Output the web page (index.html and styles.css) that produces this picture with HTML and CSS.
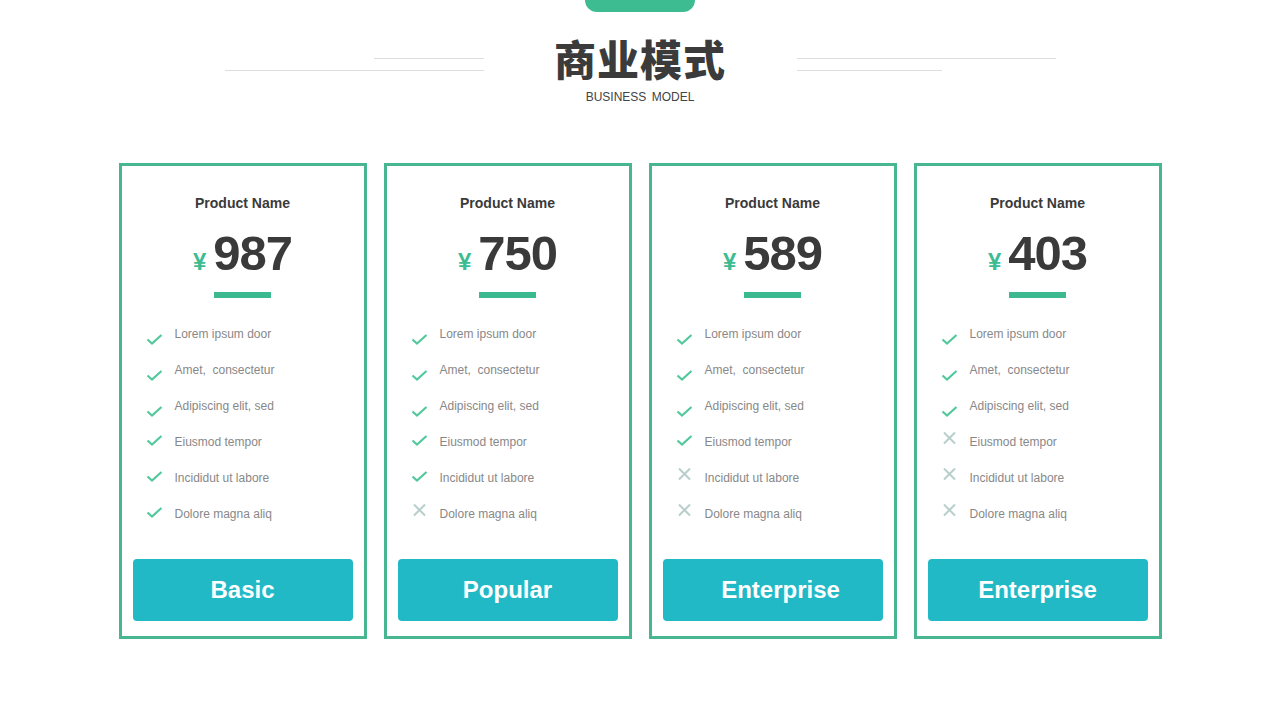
FILE: index.html
```html
<!DOCTYPE html>
<html>
<head>
  <title>商业模式</title>
  <link rel="stylesheet" href="styles.css">
</head>
<body>
  <div class="tab"></div>

  <div class="heading">
    <div class="rules rules-left">
      <span class="rule short"></span>
      <span class="rule"></span>
    </div>
    <div class="title">
      <h1>商业模式</h1>
      <p>BUSINESS MODEL</p>
    </div>
    <div class="rules rules-right">
      <span class="rule"></span>
      <span class="rule mid"></span>
    </div>
  </div>

  <div class="plans">
    <div class="plan">
      <h2>Product Name</h2>
      <div class="price"><span class="yen">¥</span>987</div>
      <div class="bar"></div>
      <ul class="features">
        <li class="yes">Lorem ipsum door</li>
        <li class="yes">Amet,&nbsp; consectetur</li>
        <li class="yes">Adipiscing elit, sed</li>
        <li class="yes">Eiusmod tempor</li>
        <li class="yes">Incididut ut labore</li>
        <li class="yes">Dolore magna aliq</li>
      </ul>
      <button>Basic</button>
    </div>

    <div class="plan">
      <h2>Product Name</h2>
      <div class="price"><span class="yen">¥</span>750</div>
      <div class="bar"></div>
      <ul class="features">
        <li class="yes">Lorem ipsum door</li>
        <li class="yes">Amet,&nbsp; consectetur</li>
        <li class="yes">Adipiscing elit, sed</li>
        <li class="yes">Eiusmod tempor</li>
        <li class="yes">Incididut ut labore</li>
        <li class="no">Dolore magna aliq</li>
      </ul>
      <button>Popular</button>
    </div>

    <div class="plan">
      <h2>Product Name</h2>
      <div class="price"><span class="yen">¥</span>589</div>
      <div class="bar"></div>
      <ul class="features">
        <li class="yes">Lorem ipsum door</li>
        <li class="yes">Amet,&nbsp; consectetur</li>
        <li class="yes">Adipiscing elit, sed</li>
        <li class="yes">Eiusmod tempor</li>
        <li class="no">Incididut ut labore</li>
        <li class="no">Dolore magna aliq</li>
      </ul>
      <button class="shifted">Enterprise</button>
    </div>

    <div class="plan">
      <h2>Product Name</h2>
      <div class="price"><span class="yen">¥</span>403</div>
      <div class="bar"></div>
      <ul class="features">
        <li class="yes">Lorem ipsum door</li>
        <li class="yes">Amet,&nbsp; consectetur</li>
        <li class="yes">Adipiscing elit, sed</li>
        <li class="no">Eiusmod tempor</li>
        <li class="no">Incididut ut labore</li>
        <li class="no">Dolore magna aliq</li>
      </ul>
      <button>Enterprise</button>
    </div>
  </div>
</body>
</html>
```

FILE: styles.css
```css
body { margin: 0; background: #fff; font-family: "Liberation Sans", Arial, "Noto Sans CJK SC", sans-serif; color: #3a3a3a; }

.tab { width: 110px; height: 12px; margin: 0 auto; background: #3dbc92; border-radius: 0 0 12px 12px; }

.heading { display: flex; justify-content: center; margin-top: 21px; }
.rules { width: 259px; display: flex; flex-direction: column; gap: 11px; padding-top: 25px; }
.rules-left { align-items: flex-end; }
.rules-right { align-items: flex-start; }
.rule { display: block; width: 259px; height: 1px; background: #dedede; }
.rule.short { width: 110px; }
.rule.mid { width: 145px; }

.title { width: 313px; text-align: center; }
.title h1 { margin: 0; font-family: "Noto Sans CJK SC", sans-serif; font-weight: 900; font-size: 42px; line-height: 50px; color: #3b3b3b; letter-spacing: 1px; }
.title p { margin: 7px 0 0; font-size: 12px; line-height: 14px; color: #444; word-spacing: 2px; }

.plans { display: grid; grid-template-columns: repeat(4, 248px); gap: 17px; justify-content: center; margin-top: 59px; }
.plan { box-sizing: border-box; height: 476px; border: 3px solid #48b690; padding: 27px 11px 15px; display: flex; flex-direction: column; align-items: center; }
.plan h2 { margin: 0; font-size: 14px; line-height: 20px; font-weight: bold; color: #3a3a3a; }

.price { margin-top: 12px; font-size: 49px; line-height: 56px; font-weight: bold; color: #3a3a3a; letter-spacing: -1px; }
.yen { font-size: 24px; color: #3dbc92; margin-right: 7px; letter-spacing: 0; }

.bar { width: 57px; height: 6px; margin-top: 2px; background: #3cb98e; }

.features { list-style: none; margin: 18px 0 0; padding: 0 0 0 13px; align-self: stretch; }
.features li { display: flex; align-items: center; height: 36px; font-size: 12px; color: #888; }
.features li::before { content: ""; width: 17px; height: 13px; margin: 10px 12px 0 0; background-repeat: no-repeat; background-position: center; }
.features li.yes::before { background-image: url("data:image/svg+xml,%3Csvg xmlns='http://www.w3.org/2000/svg' width='17' height='13' viewBox='0 0 17 13'%3E%3Cpath d='M1.5 6.5 L6 10.5 L15.5 2' fill='none' stroke='%2352c99d' stroke-width='2.2'/%3E%3C/svg%3E"); }
.features li.no::before { background-image: url("data:image/svg+xml,%3Csvg xmlns='http://www.w3.org/2000/svg' width='17' height='13' viewBox='0 0 17 13'%3E%3Cpath d='M3 0.5 L14 11.5 M14 0.5 L3 11.5' fill='none' stroke='%23b7cecb' stroke-width='2'/%3E%3C/svg%3E"); }
.features li.no::before { margin-top: 0; margin-bottom: 8px; }
.features li.yes:nth-child(n+4)::before { margin-top: 0; margin-bottom: 4px; }

button { margin-top: auto; width: 100%; height: 62px; border: none; border-radius: 4px; background: #22b9c7; color: #fff; font-family: "Liberation Sans", Arial, sans-serif; font-size: 24px; font-weight: bold; }
button.shifted { padding-left: 22px; }
```
